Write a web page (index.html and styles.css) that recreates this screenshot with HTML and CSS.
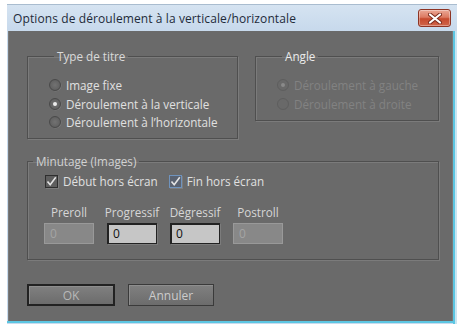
FILE: index.html
```html
<!DOCTYPE html>
<html lang="fr">
<head>
<meta charset="utf-8">
<title>Options de déroulement</title>
<link rel="stylesheet" href="styles.css">
</head>
<body>
<div class="window">
  <div class="titlebar">
    <span class="title">Options de déroulement à la verticale/horizontale</span>
    <div class="close">
      <svg width="14" height="11" viewBox="0 0 14 11">
        <path d="M2 1.5 L12 9.5 M12 1.5 L2 9.5" stroke="#7a2a1c" stroke-width="4" stroke-linecap="round" fill="none"/>
        <path d="M2 1.5 L12 9.5 M12 1.5 L2 9.5" stroke="#ffffff" stroke-width="2.2" stroke-linecap="round" fill="none"/>
      </svg>
    </div>
  </div>
  <div class="frame">
    <div class="content">
      <div class="top-row">
        <fieldset class="group type">
          <legend>Type de titre</legend>
          <div class="radio-list">
            <div class="radio"><span class="dot"></span>Image fixe</div>
            <div class="radio"><span class="dot on"></span>Déroulement à la verticale</div>
            <div class="radio"><span class="dot"></span>Déroulement à l’horizontale</div>
          </div>
        </fieldset>
        <fieldset class="group angle">
          <legend>Angle</legend>
          <div class="radio-list disabled">
            <div class="radio"><span class="dot on"></span>Déroulement à gauche</div>
            <div class="radio"><span class="dot"></span>Déroulement à droite</div>
          </div>
        </fieldset>
      </div>
      <fieldset class="group timing">
        <legend>Minutage (Images)</legend>
        <div class="checks">
          <div class="check"><span class="box"><svg width="11" height="11" viewBox="0 0 11 11"><path d="M1.5 5.5 L4.2 8.8 L9.8 1.2" stroke="#e4e4e4" stroke-width="1.6" fill="none"/></svg></span>Début hors écran</div>
          <div class="check"><span class="box focus"><svg width="11" height="11" viewBox="0 0 11 11"><path d="M1.5 5.5 L4.2 8.8 L9.8 1.2" stroke="#e4e4e4" stroke-width="1.6" fill="none"/></svg></span>Fin hors écran</div>
        </div>
        <div class="fields">
          <div class="field"><span class="flabel">Preroll</span><div class="input disabled">0</div></div>
          <div class="field"><span class="flabel">Progressif</span><div class="input">0</div></div>
          <div class="field"><span class="flabel">Dégressif</span><div class="input">0</div></div>
          <div class="field"><span class="flabel">Postroll</span><div class="input disabled">0</div></div>
        </div>
      </fieldset>
      <div class="buttons">
        <div class="btn default">OK</div>
        <div class="btn">Annuler</div>
      </div>
    </div>
  </div>
</div>
</body>
</html>
```
FILE: styles.css
```css
html, body {
  margin: 0;
  padding: 0;
  background: #ffffff;
}
body {
  font-family: "Open Sans", "Noto Sans", "DejaVu Sans", sans-serif;
  font-size: 11.7px;
}
.window {
  margin: 4px 0 0 7px;
  width: 450px;
  height: 320px;
  display: flex;
  flex-direction: column;
  background: #c8dbee;
  box-sizing: border-box;
  border-top: 1px solid #a9bccf;
}
.titlebar {
  height: 26px;
  display: flex;
  align-items: center;
  padding-left: 6px;
  background: linear-gradient(#d5e3f1, #c7d9ec);
}
.title {
  font-size: 12px;
  color: #1e2b3a;
  letter-spacing: 0.1px;
}
.close {
  margin-left: auto;
  margin-right: 6px;
  width: 33px;
  height: 18px;
  box-sizing: border-box;
  border: 1px solid #8d3424;
  border-radius: 3px;
  background: linear-gradient(#eba896 0%, #dc7a62 45%, #c64a2e 55%, #d0654a 100%);
  display: flex;
  align-items: center;
  justify-content: center;
  box-shadow: inset 0 0 0 1px rgba(255,255,255,0.35);
}
.frame {
  flex: 1;
  display: flex;
  padding: 0 4px 3px 1px;
  background: linear-gradient(90deg, #c8dbee 0, #c8dbee calc(100% - 4px), #5cc6e2 calc(100% - 4px), #5cc6e2 calc(100% - 2px), #c8e6f2 calc(100% - 2px));
  position: relative;
}
.frame::after {
  content: "";
  position: absolute;
  left: 0;
  right: 2px;
  bottom: 1px;
  height: 2px;
  background: #5cc6e2;
}
.content {
  flex: 1;
  background: #6a6a6a;
  border-left: 1px solid #7a7a7a;
  border-right: 1px solid #7a7a7a;
  padding: 17px 0 0 18px;
  color: #e0e0e0;
}
.top-row {
  display: flex;
  align-items: flex-start;
  gap: 17px;
}
.group {
  margin: 0;
  padding: 0;
  border: 1px solid #4f4f4f;
  box-shadow: 1px 1px 0 #7b7b7b, inset 1px 1px 0 #7b7b7b;
  min-width: 0;
}
.group legend {
  margin-left: 5px;
  padding: 0 3px;
  line-height: 16px;
  color: #dadada;
}
.type {
  width: 211px;
  box-sizing: border-box;
  padding: 12px 0 7px 21px;
}
.angle {
  width: 184px;
  box-sizing: border-box;
  padding: 12px 0 7px 21px;
}
.angle legend {
  color: #ececec;
}
.radio-list {
  display: flex;
  flex-direction: column;
  gap: 0.5px;
}
.radio {
  height: 18px;
  display: flex;
  align-items: center;
  gap: 5px;
  white-space: nowrap;
}
.dot {
  flex: none;
  width: 12px;
  height: 12px;
  box-sizing: border-box;
  border-radius: 50%;
  border: 1px solid #4a4a4a;
  background: radial-gradient(circle at 50% 50%, #727272 0, #646464 60%, #555 100%);
  box-shadow: 0.5px 0.5px 0 #7c7c7c;
  display: flex;
  align-items: center;
  justify-content: center;
}
.dot.on::after {
  content: "";
  width: 4px;
  height: 4px;
  border-radius: 50%;
  background: #ececec;
}
.disabled .radio {
  color: #828282;
}
.disabled .dot {
  border-color: #5e5e5e;
  background: #696969;
  box-shadow: none;
}
.disabled .dot.on::after {
  background: #8a8a8a;
}
.timing {
  width: 412px;
  box-sizing: border-box;
  margin-top: 14px;
  padding: 3px 0 15px 0;
}
.timing legend {
  color: #d2d2d2;
}
.checks {
  display: flex;
  height: 18px;
  align-items: center;
  padding-left: 17px;
  gap: 11px;
}
.check {
  display: flex;
  align-items: center;
  gap: 5px;
}
.box {
  width: 13px;
  height: 13px;
  box-sizing: border-box;
  border: 1px solid #2e2e2e;
  background: #5e5e5e;
  box-shadow: 1px 1px 0 #7c7c7c;
  display: flex;
  align-items: center;
  justify-content: center;
}
.box.focus {
  border-color: #6f93bd;
  background: #5a6270;
}
.fields {
  display: flex;
  gap: 13px;
  padding-left: 16px;
  margin-top: 14px;
}
.field {
  width: 50px;
  display: flex;
  flex-direction: column;
  align-items: center;
  gap: 3px;
}
.flabel {
  line-height: 16px;
  white-space: nowrap;
  color: #d6d6d6;
}
.input {
  width: 50px;
  height: 21px;
  box-sizing: border-box;
  background: #c6c6c6;
  border: 2px solid #222222;
  border-right-width: 1px;
  border-bottom-width: 1px;
  color: #111111;
  font-size: 12px;
  line-height: 18px;
  padding-left: 4px;
  box-shadow: 1px 1px 0 #7c7c7c;
}
.input.disabled {
  background: #888888;
  border: 1px solid #999999;
  color: #a4a4a4;
  line-height: 19px;
  padding-left: 5px;
  box-shadow: none;
}
.buttons {
  display: flex;
  gap: 13px;
  margin-top: 24px;
}
.btn {
  width: 86px;
  height: 22px;
  box-sizing: border-box;
  border: 1px solid #3a3a3a;
  background: linear-gradient(#808080, #6c6c6c);
  color: #cccccc;
  font-size: 12px;
  display: flex;
  align-items: center;
  justify-content: center;
  box-shadow: inset 1px 1px 0 #8e8e8e;
}
.btn.default {
  width: 88px;
  border: 2px solid #222222;
  color: #b8b8b8;
}
```
